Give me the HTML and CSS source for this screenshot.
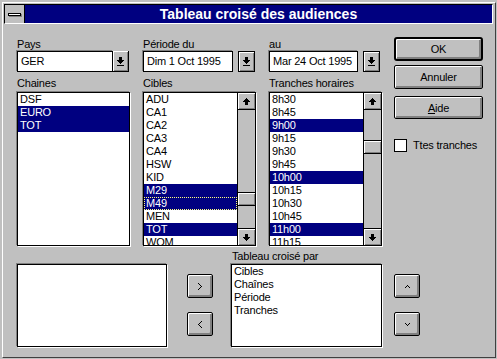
FILE: index.html
```html
<!DOCTYPE html>
<html lang="fr">
<head>
    <meta charset="UTF-8">
    <title>Tableau croisé des audiences</title>
    <link rel="stylesheet" href="styles.css">
</head>
<body>
    <div class="window">
        <div class="frame">
            <div class="titlebar">
                <div class="sysmenu"><span class="sysbar"></span></div>
                <div class="caption">Tableau croisé des audiences</div>
            </div>

            <div class="client">
                <div class="top">
                    <div class="fields">
                        <label class="lbl">Pays</label>
                        <label class="lbl">Période du</label>
                        <label class="lbl">au</label>

                        <div class="combo">
                            <div class="edit pays">GER</div>
                            <div class="drop"><svg width="7" height="9" viewBox="0 0 7 9"><path d="M2 0h3v3h2v1h-1v1h-1v1h-1v1h-1v-1h-1v-1h-1v-1h-1v-1h2z M0 8h7v1h-7z" fill="#000"/></svg></div>
                        </div>
                        <div class="combo">
                            <div class="edit debut">Dim 1 Oct 1995</div>
                            <div class="drop sep"><svg width="7" height="9" viewBox="0 0 7 9"><path d="M2 0h3v3h2v1h-1v1h-1v1h-1v1h-1v-1h-1v-1h-1v-1h-1v-1h2z M0 8h7v1h-7z" fill="#000"/></svg></div>
                        </div>
                        <div class="combo">
                            <div class="edit fin">Mar 24 Oct 1995</div>
                            <div class="drop sep"><svg width="7" height="9" viewBox="0 0 7 9"><path d="M2 0h3v3h2v1h-1v1h-1v1h-1v1h-1v-1h-1v-1h-1v-1h-1v-1h2z M0 8h7v1h-7z" fill="#000"/></svg></div>
                        </div>

                        <label class="lbl lbl2">Chaines</label>
                        <label class="lbl lbl2">Cibles</label>
                        <label class="lbl lbl2">Tranches horaires</label>

                        <div class="listbox tall">
                            <ul class="items">
                                <li>DSF</li>
                                <li class="sel">EURO</li>
                                <li class="sel">TOT</li>
                            </ul>
                        </div>
                        <div class="listbox tall">
                            <ul class="items">
                                <li>ADU</li>
                                <li>CA1</li>
                                <li>CA2</li>
                                <li>CA3</li>
                                <li>CA4</li>
                                <li>HSW</li>
                                <li>KID</li>
                                <li class="sel">M29</li>
                                <li class="sel focus">M49</li>
                                <li>MEN</li>
                                <li class="sel">TOT</li>
                                <li>WOM</li>
                            </ul>
                            <div class="vscroll">
                                <div class="sbtn"><svg width="7" height="7" viewBox="0 0 7 7"><path d="M3 0h1v1h1v1h1v1h1v1h-2v3h-3v-3h-2v-1h1v-1h1v-1h1z" fill="#000"/></svg></div>
                                <div class="track">
                                    <div class="thumb cibles-thumb"></div>
                                </div>
                                <div class="sbtn"><svg width="7" height="7" viewBox="0 0 7 7"><path d="M2 0h3v3h2v1h-1v1h-1v1h-1v1h-1v-1h-1v-1h-1v-1h-1v-1h2z" fill="#000"/></svg></div>
                            </div>
                        </div>
                        <div class="listbox tall">
                            <ul class="items">
                                <li>8h30</li>
                                <li>8h45</li>
                                <li class="sel">9h00</li>
                                <li>9h15</li>
                                <li>9h30</li>
                                <li>9h45</li>
                                <li class="sel">10h00</li>
                                <li>10h15</li>
                                <li>10h30</li>
                                <li>10h45</li>
                                <li class="sel">11h00</li>
                                <li>11h15</li>
                            </ul>
                            <div class="vscroll">
                                <div class="sbtn"><svg width="7" height="7" viewBox="0 0 7 7"><path d="M3 0h1v1h1v1h1v1h1v1h-2v3h-3v-3h-2v-1h1v-1h1v-1h1z" fill="#000"/></svg></div>
                                <div class="track">
                                    <div class="thumb tranches-thumb"></div>
                                </div>
                                <div class="sbtn"><svg width="7" height="7" viewBox="0 0 7 7"><path d="M2 0h3v3h2v1h-1v1h-1v1h-1v1h-1v-1h-1v-1h-1v-1h-1v-1h2z" fill="#000"/></svg></div>
                            </div>
                        </div>
                    </div>

                    <div class="side">
                        <button class="btn default">OK</button>
                        <button class="btn cancel">Annuler</button>
                        <button class="btn help"><u>A</u>ide</button>
                        <label class="check"><span class="box"></span>Ttes tranches</label>
                    </div>
                </div>

                <div class="bottom">
                    <div class="listbox short left-list"></div>

                    <div class="movers">
                        <button class="btn small"><svg width="4" height="7" viewBox="0 0 4 7"><path d="M0 0h1v1h1v1h1v1h1v1h-1v1h-1v1h-1v1h-1v-1h1v-1h1v-1h1v-1h-1v-1h-1v-1h-1z" fill="#000"/></svg></button>
                        <button class="btn small"><svg width="4" height="7" viewBox="0 0 4 7"><path d="M3 0h1v1h-1v1h-1v1h-1v1h1v1h1v1h1v1h-1v-1h-1v-1h-1v-1h-1v-1h1v-1h1v-1h1z" fill="#000"/></svg></button>
                    </div>

                    <div class="crossed">
                        <label class="lbl">Tableau croisé par</label>
                        <div class="listbox short">
                            <ul class="items">
                                <li>Cibles</li>
                                <li>Chaînes</li>
                                <li>Période</li>
                                <li>Tranches</li>
                            </ul>
                        </div>
                    </div>

                    <div class="movers">
                        <button class="btn small"><svg width="5" height="3" viewBox="0 0 5 3"><path d="M2 0h1v1h1v1h1v1h-1v-1h-1v-1h-1v1h-1v1h-1v-1h1v-1h1z" fill="#000"/></svg></button>
                        <button class="btn small"><svg width="5" height="3" viewBox="0 0 5 3"><path d="M0 0h1v1h1v1h1v-1h1v-1h1v1h-1v1h-1v1h-1v-1h-1v-1h-1z" fill="#000"/></svg></button>
                    </div>
                </div>
            </div>
        </div>
    </div>
</body>
</html>
```

FILE: styles.css
```css
body {
    margin: 0;
    background: #c0c0c0;
    font-family: "Liberation Sans", Arial, sans-serif;
    font-size: 11px;
    letter-spacing: -0.2px;
    color: #000;
}

.window {
    width: 497px;
    height: 359px;
    box-sizing: border-box;
    padding: 2px 1px 1px 2px;
    background: #c0c0c0;
}

.frame {
    height: 100%;
    box-sizing: border-box;
    border-left: 1px solid #fff;
    border-top: 1px solid #fff;
    border-right: 1px solid #404040;
    border-bottom: 1px solid #404040;
    padding: 1px 2px 0 1px;
    display: flex;
    flex-direction: column;
}

/* barre de titre */
.titlebar {
    display: flex;
    height: 20px;
    box-sizing: border-box;
    border-top: 1px solid #000;
    border-left: 1px solid #000;
    border-right: 1px solid #fff;
    border-bottom: 1px solid #fff;
}

.sysmenu {
    width: 19px;
    border-right: 1px solid #000;
    background: #c0c0c0;
    display: flex;
    align-items: center;
    justify-content: center;
}

.sysbar {
    width: 11px;
    height: 1px;
    background: #fff;
    border: 1px solid #000;
    box-shadow: 1px 1px 0 #808080;
}

.caption {
    flex: 1;
    background: #000080;
    color: #fff;
    font-weight: bold;
    font-size: 14px;
    letter-spacing: 0;
    line-height: 18px;
    text-align: center;
}

/* zone client */
.client {
    flex: 1;
    padding: 0 0 0 13px;
}

.top {
    display: flex;
    gap: 12px;
}

.fields {
    display: grid;
    grid-template-columns: 113px 113px 113px;
    column-gap: 13px;
    padding-top: 14px;
}

.lbl {
    display: block;
    height: 13px;
    line-height: 13px;
    white-space: nowrap;
}

.lbl2 {
    margin-top: 5px;
    margin-bottom: 2px;
}

.combo {
    display: flex;
    height: 21px;
}

.edit {
    height: 21px;
    box-sizing: border-box;
    background: #fff;
    border: 1px solid #000;
    box-shadow: -1px -1px 0 #808080;
    padding: 0 3px;
    line-height: 19px;
    white-space: nowrap;
}

.pays { width: 96px; }
.debut { width: 90px; }
.fin { width: 89px; }

.drop {
    width: 16px;
    height: 21px;
    box-sizing: border-box;
    background: #c0c0c0;
    border-right: 1px solid #000;
    border-bottom: 1px solid #000;
    box-shadow: inset 1px 1px 0 #fff, inset -1px -1px 0 #808080;
    display: flex;
    align-items: center;
    justify-content: center;
}

.drop.sep {
    margin-left: 5px;
    border: 1px solid #000;
    width: 17px;
}

/* listes */
.listbox {
    display: flex;
    box-sizing: border-box;
    background: #fff;
    border: 1px solid #000;
    box-shadow: -1px -1px 0 #808080, 1px 1px 0 #fff;
    overflow: hidden;
}

.tall { height: 154px; }
.short { height: 83px; }

.items {
    flex: 1;
    list-style: none;
    margin: 0;
    padding: 0;
    min-width: 0;
}

.items li {
    height: 13px;
    line-height: 13px;
    padding-left: 2px;
    white-space: nowrap;
}

.items li.sel {
    background: #000080;
    color: #fff;
}

.items li.focus {
    outline: 1px dotted #ffff80;
    outline-offset: -1px;
}

.vscroll {
    width: 17px;
    border-left: 1px solid #000;
    display: flex;
    flex-direction: column;
    background: #c0c0c0;
}

.sbtn {
    height: 16px;
    box-sizing: border-box;
    box-shadow: inset 1px 1px 0 #fff, inset -1px -1px 0 #808080;
    display: flex;
    align-items: center;
    justify-content: center;
}

.sbtn:first-child { border-bottom: 1px solid #000; height: 17px; }
.sbtn:last-child { border-top: 1px solid #000; height: 17px; }

.track {
    flex: 1;
    background: #c0c0c0;
}

.thumb {
    height: 14px;
    box-sizing: border-box;
    border-top: 1px solid #000;
    border-bottom: 1px solid #000;
    box-shadow: inset 1px 1px 0 #fff, inset -1px -1px 0 #808080;
}

.cibles-thumb { margin-top: 82px; }
.tranches-thumb { margin-top: 30px; }

/* boutons */
.side {
    width: 89px;
    padding-top: 13px;
    display: flex;
    flex-direction: column;
}

.btn {
    font: inherit;
    letter-spacing: inherit;
    color: #000;
    background: #c0c0c0;
    border: 1px solid #000;
    border-radius: 2px;
    box-shadow: inset 1px 1px 0 #fff, inset -2px -2px 0 #808080;
    padding: 0;
    height: 24px;
}

.btn u { text-decoration: underline; }

.btn.default {
    border-width: 2px;
    border-radius: 3px;
}

.btn.cancel { margin-top: 4px; }
.btn.help { margin-top: 7px; height: 23px; }

.check {
    margin-top: 20px;
    display: flex;
    align-items: center;
    gap: 6px;
    line-height: 13px;
    white-space: nowrap;
}

.box {
    width: 13px;
    height: 13px;
    box-sizing: border-box;
    background: #fff;
    border: 1px solid #000;
}

/* bas */
.bottom {
    display: grid;
    grid-template-columns: 150px 20px 26px 18px 151px 12px 26px;
    grid-template-rows: 13px 83px;
    row-gap: 1px;
    margin-top: 4px;
}

.left-list {
    grid-column: 1;
    grid-row: 2;
}

.movers {
    grid-row: 2;
    display: flex;
    flex-direction: column;
    gap: 14px;
    padding-top: 10px;
}

.movers:nth-of-type(2) { grid-column: 3; }
.movers:nth-of-type(4) { grid-column: 7; }

.crossed {
    grid-column: 5;
    grid-row: 1 / 3;
    display: flex;
    flex-direction: column;
    gap: 1px;
}

.crossed .lbl {
    padding-left: 1px;
}

.btn.small {
    width: 26px;
    height: 24px;
    display: flex;
    align-items: center;
    justify-content: center;
}
```
